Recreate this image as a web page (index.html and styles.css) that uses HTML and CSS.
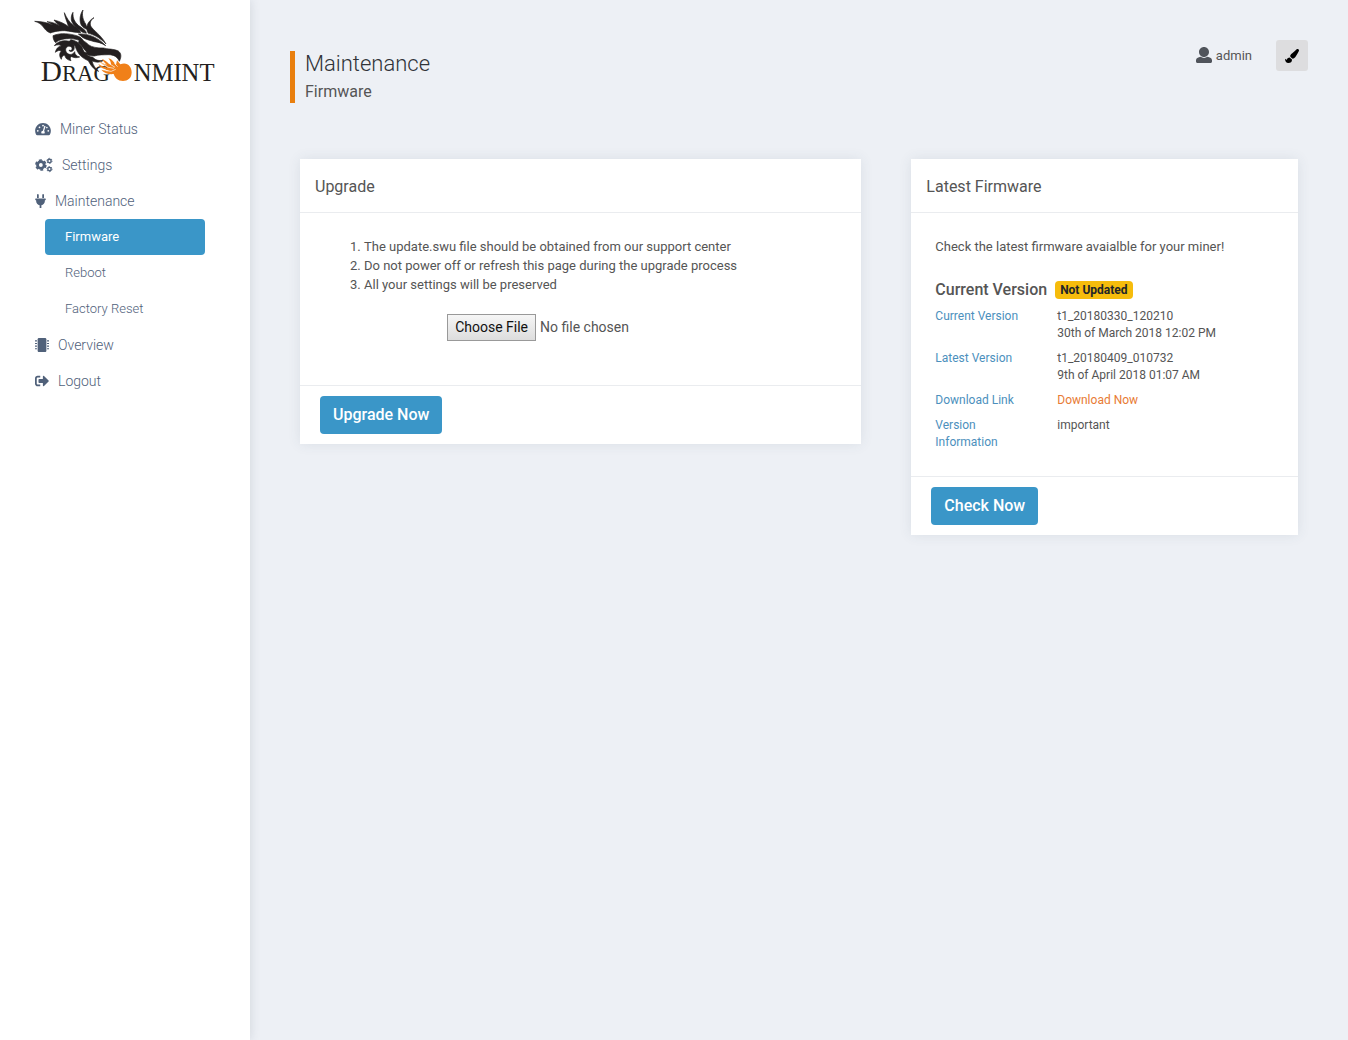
FILE: index.html
```html
<!DOCTYPE html>
<html lang="en">
<head>
<meta charset="utf-8">
<meta name="viewport" content="width=device-width, initial-scale=1">
<title>Maintenance - Firmware</title>
<link rel="stylesheet" href="styles.css">
</head>
<body>
<div class="app">
  <aside class="sidebar">
    <a class="brand" href="#">
      <svg class="brand-logo" viewBox="0 0 600 285" role="img" aria-label="Dragonmint">
        <g fill="#231f20" stroke="#231f20" stroke-width="2">
          <path d="M29 64C48 64 66 67 84 76C78 71 72 67 66 65C80 66 92 70 104 77C96 72 92 66 87 60C104 64 119 71 131 80C126 66 119 50 118 38C124 52 132 66 145 76C157 85 164 89 167 98C151 98 133 93 119 92C98 92 84 96 76 99C65 95 60 88 55 81C49 73 41 67 29 64Z"/>
          <path d="M144 37C143 54 148 65 160 76C172 85 184 91 184 100L173 97C157 86 142 75 139 60C138 50 140 43 144 37Z"/>
          <path d="M174 30C170 45 174 60 182 72C184 80 188 85 196 90C184 89 175 84 169 76C162 62 165 42 174 30Z"/>
          <path d="M207 53C197 60 194 68 197 78C206 93 226 102 243 132C224 112 206 104 190 100C182 88 183 66 207 53Z"/>
          <path d="M84 107C108 97 136 101 158 108C168 111 172 117 178 127C160 119 145 115 130 116C116 116 100 119 92 128C87 123 84 116 84 107Z"/>
          <path d="M160 102C188 100 220 112 242 137C229 129 219 126 208 125C195 121 184 119 174 113Z"/>
          <path d="M164 119C175 122 184 126 190 134C201 142 216 144 236 144C246 148 268 146 280 153C289 160 290 170 283 184C277 170 266 164 250 164C236 165 222 163 208 168C196 168 184 166 174 157L186 158C178 148 170 137 160 128Z"/>
          <path d="M137 119C153 121 165 130 171 142C177 157 184 170 204 172C211 181 222 183 236 181C226 188 211 188 201 182C204 197 212 206 221 214C204 208 195 192 190 182C170 174 160 162 154 148C151 136 143 129 132 127Z"/>
          <path d="M134 124C116 119 98 124 88 137C98 133 105 134 109 138C99 139 93 147 91 157C98 151 105 150 109 153C102 160 103 170 109 178C110 169 115 165 120 166C120 174 127 180 138 182C134 175 136 170 140 170C148 174 156 174 164 171C154 169 149 162 149 155C144 164 134 166 127 160C119 152 121 142 130 139C137 137 143 142 141 148C140 152 135 152 132 150C134 157 144 156 147 148C150 136 145 128 134 124Z"/>
        </g>
        <path fill="#fff" d="M196 129C208 128 220 130 230 138C216 138 204 137 196 129Z"/>
        <g class="brand-text" fill="#231f20">
          <text x="47" y="242" font-size="88">D</text>
          <text x="111" y="242" font-size="68">RAG</text>
          <text x="326" y="242" font-size="74">NMINT</text>
        </g>
        <circle cx="294" cy="218" r="28" fill="#fff"/>
        <path fill="#f08019" d="M221 179C230 190 239 191 246 195C238 187 234 184 231 177C244 182 251 192 258 194C258 187 256 182 250 175C265 179 267 190 273 194L276 181L286 193C307 185 320 200 320 217C320 235 308 243 294 243C278 243 270 234 266 222C251 224 237 219 229 209C240 213 248 212 254 212C241 208 226 205 220 192C231 199 240 202 249 203C237 196 227 190 221 179Z"/>
        <path fill="none" stroke="#fff" stroke-width="2" d="M232 190Q249 206 267 205M250 189L270 202M242 212Q260 218 272 208M268 190L278 200"/>
      </svg>
    </a>
    <nav class="nav" aria-label="Main">
      <a class="nav-link" href="#">
        <svg class="icon" width="16" height="14" viewBox="0 0 576 512" aria-hidden="true"><path d="M75.694 480a48.02 48.02 0 0 1-42.448-25.571C12.023 414.3 0 368.556 0 320 0 160.942 128.942 32 288 32s288 128.942 288 288c0 48.556-12.023 94.3-33.246 134.429A48.018 48.018 0 0 1 500.306 480H75.694z"/><g fill="#fff"><circle cx="96" cy="320" r="32"/><circle cx="160" cy="192" r="32"/><circle cx="288" cy="128" r="32"/><circle cx="480" cy="320" r="32"/><circle cx="430" cy="205" r="30"/><path d="M338 138l46 15-55 180c14 12 23 29 23 51 0 15-4 25-12 36H236c-8-11-12-22-12-36 0-35 28-63 60-64z"/></g></svg>
        Miner Status
      </a>
      <a class="nav-link" href="#">
        <svg class="icon" width="18" height="14" viewBox="0 0 640 512" aria-hidden="true"><g fill="none" stroke="currentColor"><circle cx="205" cy="256" r="122" stroke-width="104"/><circle cx="205" cy="256" r="182" stroke-width="60" stroke-dasharray="106 85"/><circle cx="520" cy="106" r="62" stroke-width="52"/><circle cx="520" cy="106" r="94" stroke-width="34" stroke-dasharray="54 44"/><circle cx="520" cy="406" r="62" stroke-width="52"/><circle cx="520" cy="406" r="94" stroke-width="34" stroke-dasharray="54 44"/></g></svg>
        Settings
      </a>
      <a class="nav-link" href="#">
        <svg class="icon" width="11" height="14" viewBox="0 0 384 512" aria-hidden="true"><path d="M256 144V32c0-17.673 14.327-32 32-32s32 14.327 32 32v112h-64zm112 16H16c-8.837 0-16 7.163-16 16v32c0 8.837 7.163 16 16 16h16v32c0 77.406 54.969 141.971 128 156.796V512h64v-99.204c73.031-14.825 128-79.39 128-156.796v-32h16c8.837 0 16-7.163 16-16v-32c0-8.837-7.163-16-16-16zm-240-16V32c0-17.673-14.327-32-32-32S64 14.327 64 32v112h64z"/></svg>
        Maintenance
      </a>
      <div class="subnav">
        <a class="subnav-link subnav-link-active" href="#" aria-current="page">Firmware</a>
        <a class="subnav-link" href="#">Reboot</a>
        <a class="subnav-link" href="#">Factory Reset</a>
      </div>
      <a class="nav-link" href="#">
        <svg class="icon" width="14" height="14" viewBox="0 0 512 512" aria-hidden="true"><path d="M416 48v416c0 26.510-21.490 48-48 48H144c-26.510 0-48-21.490-48-48V48c0-26.510 21.490-48 48-48h224c26.510 0 48 21.490 48 48z"/><path d="M0 84h72v40H0zM0 180h72v40H0zM0 276h72v40H0zM0 372h72v40H0zM440 84h72v40h-72zM440 180h72v40h-72zM440 276h72v40h-72zM440 372h72v40h-72z"/></svg>
        Overview
      </a>
      <a class="nav-link" href="#">
        <svg class="icon" width="14" height="14" viewBox="0 0 512 512" aria-hidden="true"><path d="M497 273L329 441c-15 15-41 4.500-41-17v-96H152c-13.300 0-24-10.700-24-24v-96c0-13.300 10.700-24 24-24h136V88c0-21.400 25.900-32 41-17l168 168c9.300 9.400 9.300 24.600 0 34zM192 436v-40c0-6.600-5.400-12-12-12H96c-17.700 0-32-14.300-32-32V160c0-17.700 14.300-32 32-32h84c6.600 0 12-5.400 12-12V76c0-6.600-5.400-12-12-12H96c-53 0-96 43-96 96v192c0 53 43 96 96 96h84c6.600 0 12-5.400 12-12z"/></svg>
        Logout
      </a>
    </nav>
  </aside>

  <main class="main">
    <header class="page-header">
      <div class="page-title">
        <h1>Maintenance</h1>
        <p>Firmware</p>
      </div>
      <div class="user-tools">
        <a class="user" href="#">
          <svg class="icon" width="16" height="16" viewBox="0 0 512 512" aria-hidden="true"><path d="M256 0c88.366 0 160 71.634 160 160 0 88.365-71.634 160-160 160S96 248.365 96 160C96 71.634 167.635 0 256 0zm183.283 333.821l-71.313-17.828c-74.923 53.890-165.738 41.864-223.940 0l-71.313 17.828C29.981 344.505 0 382.903 0 426.955V464c0 26.510 21.490 48 48 48h416c26.510 0 48-21.490 48-48v-37.045c0-44.052-29.981-82.450-72.717-93.134z"/></svg>
          admin
        </a>
        <button class="theme-button" type="button" aria-label="Change theme">
          <svg class="icon" width="14" height="14" viewBox="0 0 512 512" aria-hidden="true"><path d="M167.020 309.340c-40.120 2.580-76.530 17.860-97.190 72.300-2.350 6.210-8 9.980-14.590 9.980-11.110 0-45.460-27.670-55.250-34.350C0 439.620 37.930 512 128 512c75.860 0 128-43.770 128-120.190 0-3.110-.65-6.080-.97-9.130l-88.010-73.340zM457.890 0c-15.160 0-29.370 6.710-40.210 16.450C213.270 199.050 192 203.340 192 257.090c0 13.700 3.250 26.760 8.730 38.700l63.820 53.180c7.210 1.800 14.640 3.030 22.390 3.030 62.110 0 98.110-45.470 211.160-256.460 7.380-14.350 13.900-29.850 13.900-45.990C512 20.640 486 0 457.890 0z"/></svg>
        </button>
      </div>
    </header>

    <div class="columns">
      <section class="column">
        <form class="card">
          <h2 class="card-header">Upgrade</h2>
          <div class="card-body">
            <ol class="notes">
              <li>The update.swu file should be obtained from our support center</li>
              <li>Do not power off or refresh this page during the upgrade process</li>
              <li>All your settings will be preserved</li>
            </ol>
            <input class="file-input" type="file" aria-label="Firmware file">
          </div>
          <div class="card-footer"><button class="button" type="button">Upgrade Now</button></div>
        </form>
      </section>
      <section class="column">
        <div class="card">
          <h2 class="card-header">Latest Firmware</h2>
          <div class="card-body">
            <p class="intro">Check the latest firmware avaialble for your miner!</p>
            <div class="version-heading">
              <h3>Current Version</h3>
              <span class="badge">Not Updated</span>
            </div>
            <table class="versions">
              <tbody>
                <tr><th scope="row">Current Version</th><td>t1_20180330_120210<br>30th of March 2018 12:02 PM</td></tr>
                <tr><th scope="row">Latest Version</th><td>t1_20180409_010732<br>9th of April 2018 01:07 AM</td></tr>
                <tr><th scope="row">Download Link</th><td><a class="download" href="#">Download Now</a></td></tr>
                <tr><th scope="row">Version Information</th><td>important</td></tr>
              </tbody>
            </table>
          </div>
          <div class="card-footer"><button class="button" type="button">Check Now</button></div>
        </div>
      </section>
    </div>
  </main>
</div>
</body>
</html>
```
FILE: styles.css
```css
* { box-sizing: border-box; }

body {
  margin: 0;
  background: #edf0f5;
  color: #555555;
  font: 400 13px/19px Roboto, sans-serif;
}

h1, h2, h3, p, ol { margin: 0; }
a { color: inherit; text-decoration: none; }
button, input { font-family: inherit; }
.icon { flex: none; fill: currentColor; overflow: visible; }

.app { display: flex; min-height: 100vh; }

/* Sidebar */
.sidebar {
  flex: 0 0 250px;
  padding: 0 35px;
  background: #fff;
  box-shadow: 0 0 10px rgba(60, 75, 95, 0.16);
}
.brand { display: block; margin: 0 -10px; }
.brand-logo { display: block; width: 200px; height: 95px; overflow: visible; }
.brand-text { font-family: "Liberation Serif", serif; }
.nav { margin-top: 16px; color: #50617a; font-weight: 300; }
.nav-link {
  display: flex;
  align-items: center;
  gap: 9px;
  height: 36px;
  font-size: 14px;
}
.subnav { padding: 0 10px; }
.subnav-link {
  display: block;
  padding: 0 20px;
  border-radius: 4px;
  font-size: 13px;
  line-height: 36px;
}
.subnav-link-active { background: #3a96c8; color: #fff; font-weight: 400; }

/* Page header */
.main { flex: 1; min-width: 0; padding: 40px; }
.page-header {
  display: flex;
  align-items: flex-start;
  justify-content: space-between;
}
.page-title {
  margin-top: 11px;
  padding-left: 10px;
  border-left: 5px solid #e97f0e;
}
.page-title h1 {
  color: #303338;
  font-size: 22px;
  font-weight: 300;
  line-height: 26px;
}
.page-title p { padding-top: 3px; font-size: 16px; line-height: 23px; }
.user-tools { display: flex; align-items: center; gap: 24px; }
.user { display: flex; align-items: center; gap: 4px; }
.user .icon { margin-bottom: 2px; color: #50545b; }
.theme-button {
  display: flex;
  align-items: center;
  justify-content: center;
  width: 32px;
  height: 31px;
  padding: 0;
  border: 0;
  border-radius: 3px;
  background: #dddddf;
  color: #000;
}

/* Cards */
.columns {
  display: grid;
  grid-template-columns: minmax(0, 7fr) minmax(0, 5fr);
  align-items: start;
  margin: 56px -15px 0;
}
.column { padding: 0 25px; }
.card { background: #fff; box-shadow: 0 0 12px rgba(60, 75, 95, 0.1); }
.card-header {
  padding: 16px 15px 13px;
  border-bottom: 1px solid #eaecef;
  font-size: 16px;
  font-weight: 400;
  line-height: 24px;
}
.card-body { padding: 24px 24px 21px; }
.card-footer { padding: 10px 20px; border-top: 1px solid #eaecef; }
.button {
  display: block;
  height: 38px;
  padding: 0 13px 2px;
  border: 0;
  border-radius: 4px;
  background: #3a96c8;
  color: #fff;
  font-size: 16px;
  font-weight: 500;
}
.notes { padding-left: 40px; }
.file-input {
  display: block;
  width: 267px;
  margin: 20px auto 23px;
  font-size: 14px;
}
.file-input::file-selector-button {
  height: 27px;
  padding: 0 7px 1px;
  border: 1px solid #999;
  border-radius: 0;
  background: linear-gradient(#f6f6f6, #dddddd);
  color: #111;
  font: inherit;
}
.version-heading {
  display: flex;
  align-items: center;
  gap: 8px;
  margin-top: 24px;
}
.version-heading h3 { font-size: 16px; font-weight: 500; line-height: 19px; }
.badge {
  padding: 0 5px;
  border-radius: 4px;
  background: #f6bc0c;
  color: #212529;
  font-size: 12px;
  font-weight: 700;
  line-height: 18px;
}
.versions {
  width: 100%;
  margin-top: 5px;
  border-collapse: collapse;
  table-layout: fixed;
  font-size: 12px;
  line-height: 17px;
}
.versions th, .versions td { padding: 4px 0; text-align: left; vertical-align: top; }
.versions th {
  width: 36%;
  padding-right: 30px;
  color: #4c90bd;
  font-weight: 400;
}
.download { color: #e87b35; }
```
